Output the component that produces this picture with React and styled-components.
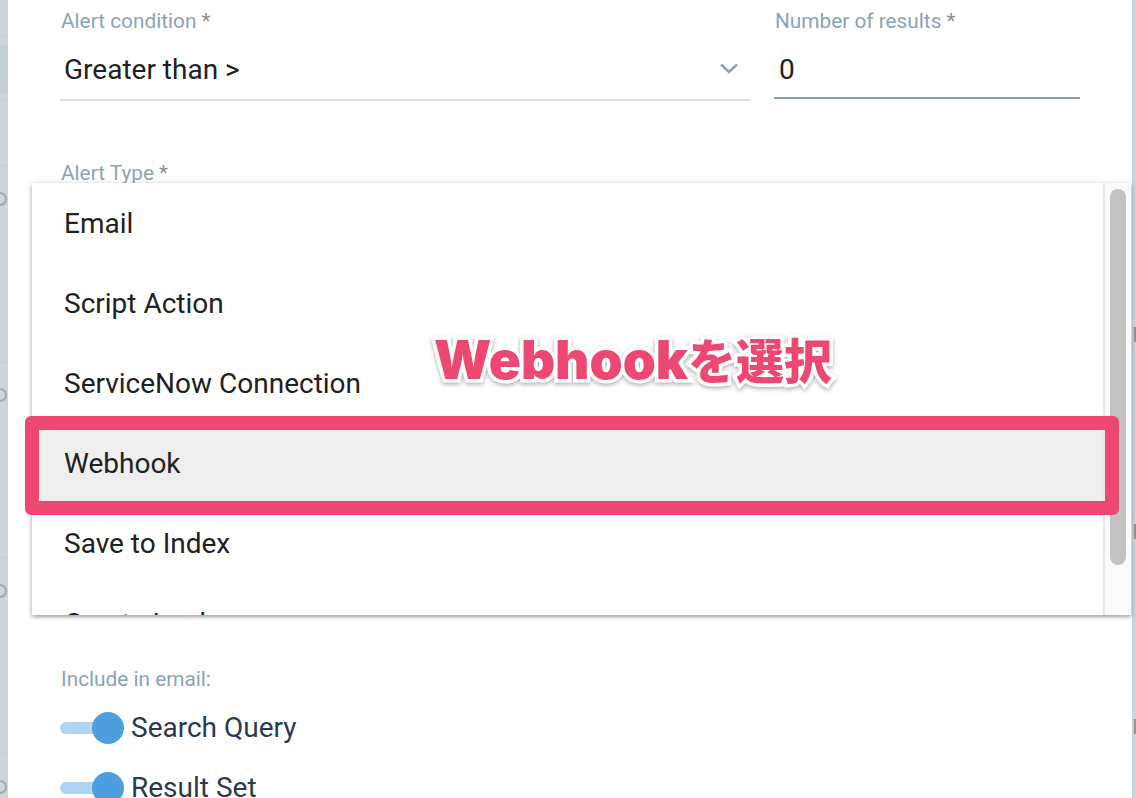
import React from "react";
import styled, { createGlobalStyle } from "styled-components";

const Global = createGlobalStyle`
  html, body { margin: 0; padding: 0; height: 100%; overflow: hidden; background: #cdd5db; }
  body { font-family: Roboto, "Noto Sans", sans-serif; }
`;

const Page = styled.div`
  position: relative;
  width: 1136px;
  height: 798px;
  display: flex;
  overflow: hidden;
  background: #cdd5db;
`;

const Backdrop = styled.div`
  width: ${(p) => p.$w}px;
  flex: none;
  display: flex;
  flex-direction: column;
  overflow: hidden;
`;

const BackdropRow = styled.div`
  flex: none;
  height: ${(p) => p.$h}px;
  box-sizing: border-box;
  border-bottom: 1px solid #c5ced5;
  background: ${(p) => p.$bg || "transparent"};
  position: relative;
`;

const Ring = styled.span`
  position: absolute;
  left: -7px;
  top: ${(p) => p.$top}px;
  width: 14px;
  height: 14px;
  box-sizing: border-box;
  border: 2.5px solid #a3a9ad;
  border-radius: 50%;
`;

const Glyph = styled.span`
  position: absolute;
  left: 0;
  top: ${(p) => p.$top}px;
  font-size: 28px;
  line-height: 30px;
  color: #8b939a;
`;

const Modal = styled.main`
  flex: 1;
  background: #fff;
  padding: 8px 52px 0 52px;
  min-width: 0;
  display: flex;
  flex-direction: column;
`;

const TopRow = styled.div`
  display: flex;
  gap: 24px;
`;

const Field = styled.div`
  flex: ${(p) => (p.$wide ? "none" : "1")};
  width: ${(p) => (p.$wide ? "690px" : "auto")};
  display: flex;
  flex-direction: column;
`;

const Label = styled.label`
  font-size: 20.8px;
  line-height: 26px;
  color: #8ea2b6;
  padding-left: 1px;
`;

const Star = styled.span`
  color: #8f8f8f;
  margin-left: 5px;
`;

const Control = styled.div`
  height: ${(p) => p.$h}px;
  box-sizing: border-box;
  border-bottom: 2px solid ${(p) => p.$line};
  display: flex;
  align-items: center;
  justify-content: space-between;
  padding: ${(p) => p.$pt}px 12px 0 ${(p) => p.$pl}px;
  font-size: 28px;
  color: #212121;
`;

const Chevron = styled.svg`
  width: 18px;
  height: 11px;
  fill: none;
  stroke: #8ea2b6;
  stroke-width: 2.4;
  margin-bottom: 1px;
`;

const AlertLabelBlock = styled.div`
  margin-top: 59px;
  height: 26px;
`;

const Menu = styled.div`
  position: absolute;
  left: 32px;
  top: 183px;
  width: 1099px;
  height: 432px;
  background: #fff;
  overflow: hidden;
  display: flex;
  box-shadow: 0 2px 4px rgba(0, 0, 0, 0.35), 0 0 6px rgba(0, 0, 0, 0.08);
`;

const MenuList = styled.ul`
  flex: 1;
  margin: 0;
  padding: 0;
  list-style: none;
`;

const MenuItem = styled.li`
  height: 80px;
  box-sizing: border-box;
  padding-left: 32px;
  display: flex;
  align-items: center;
  font-size: 28px;
  color: #212121;
  background: ${(p) => (p.$active ? "#eeeeee" : "transparent")};
`;

const ScrollTrack = styled.div`
  width: 28px;
  flex: none;
  box-sizing: border-box;
  background: #fafafa;
  border-left: 2px solid #e8e8e8;
  padding: 6px 5px 0 5px;
`;

const ScrollThumb = styled.div`
  width: 16px;
  height: 376px;
  border-radius: 8px;
  background: #c2c2c2;
`;

const Highlight = styled.div`
  position: absolute;
  left: 25px;
  top: 416px;
  width: 1094px;
  height: 99px;
  box-sizing: border-box;
  border: 14px solid #ed4871;
  border-radius: 6px;
`;

const Callout = styled.div`
  position: absolute;
  left: 434px;
  top: 324px;
  font-family: Inter, "Noto Sans CJK JP", sans-serif;
  font-weight: 900;
  font-size: 53px;
  line-height: 68px;
  white-space: nowrap;
  color: #ed4871;
  -webkit-text-stroke: 7px #fff;
  paint-order: stroke fill;
  filter: drop-shadow(0 2px 2px rgba(0, 0, 0, 0.3));
`;

const CalloutKana = styled.span`
  font-family: "Noto Sans CJK JP", sans-serif;
  font-size: 48px;
`;

const Options = styled.section`
  margin-top: 480px;
  display: flex;
  flex-direction: column;
`;

const OptionsTitle = styled.div`
  font-size: 20.8px;
  line-height: 26px;
  color: #8ea2b6;
  padding-left: 1px;
  margin-bottom: 6px;
`;

const ToggleRow = styled.div`
  height: 60px;
  flex: none;
  display: flex;
  align-items: center;
  gap: 7px;
  font-size: 28px;
  color: #2a3a4f;
`;

const ToggleText = styled.span`
  margin-top: -2px;
`;

const Toggle = styled.span`
  position: relative;
  width: 64px;
  height: 32px;
  flex: none;
`;

const Track = styled.span`
  position: absolute;
  left: 0;
  top: 10px;
  width: 48px;
  height: 12px;
  border-radius: 6px;
  background: #aed4f2;
`;

const Knob = styled.span`
  position: absolute;
  right: 0;
  top: 0;
  width: 32px;
  height: 32px;
  border-radius: 50%;
  background: #4d9fe0;
`;

const leftRows = [
  { h: 36 },
  { h: 10 },
  { h: 47, bg: "#c3ced5" },
  { h: 8 },
  { h: 65 },
  { h: 197, ring: 26 },
  { h: 195, ring: 25 },
  { h: 196, ring: 26 },
  { h: 60, ring: 26 },
];

const rightRows = [
  { h: 36 },
  { h: 64 },
  { h: 65 },
  { h: 197, glyph: 153 },
  { h: 195, glyph: 153 },
  { h: 196, glyph: 153 },
  { h: 60 },
];

const items = ["Email", "Script Action", "ServiceNow Connection", "Webhook", "Save to Index", "Create Lookup"];

export default function App() {
  return (
    <Page>
      <Global />
      <Backdrop $w={8}>
        {leftRows.map((r, i) => (
          <BackdropRow key={i} $h={r.h} $bg={r.bg}>
            {r.ring !== undefined && <Ring $top={r.ring} />}
          </BackdropRow>
        ))}
      </Backdrop>
      <Modal>
        <TopRow>
          <Field $wide>
            <Label>Alert condition<Star>*</Star></Label>
            <Control $h={67} $pt={5} $pl={4} $line="#e0e0e0">
              Greater than &gt;
              <Chevron viewBox="0 0 18 11"><path d="M1 1.5 9 9l8-7.5" /></Chevron>
            </Control>
          </Field>
          <Field>
            <Label>Number of results<Star>*</Star></Label>
            <Control $h={65} $pt={7} $pl={5} $line="#8a9fb2">0</Control>
          </Field>
        </TopRow>
        <AlertLabelBlock>
          <Label>Alert Type<Star>*</Star></Label>
        </AlertLabelBlock>
        <Options>
          <OptionsTitle>Include in email:</OptionsTitle>
          <ToggleRow><Toggle><Track /><Knob /></Toggle><ToggleText>Search Query</ToggleText></ToggleRow>
          <ToggleRow><Toggle><Track /><Knob /></Toggle><ToggleText>Result Set</ToggleText></ToggleRow>
        </Options>
      </Modal>
      <Backdrop $w={4}>
        {rightRows.map((r, i) => (
          <BackdropRow key={i} $h={r.h}>
            {r.glyph !== undefined && <Glyph $top={r.glyph}>r</Glyph>}
          </BackdropRow>
        ))}
      </Backdrop>
      <Menu>
        <MenuList>
          {items.map((t) => (
            <MenuItem key={t} $active={t === "Webhook"}>{t}</MenuItem>
          ))}
        </MenuList>
        <ScrollTrack><ScrollThumb /></ScrollTrack>
      </Menu>
      <Highlight />
      <Callout>Webhook<CalloutKana>を選択</CalloutKana></Callout>
    </Page>
  );
}
